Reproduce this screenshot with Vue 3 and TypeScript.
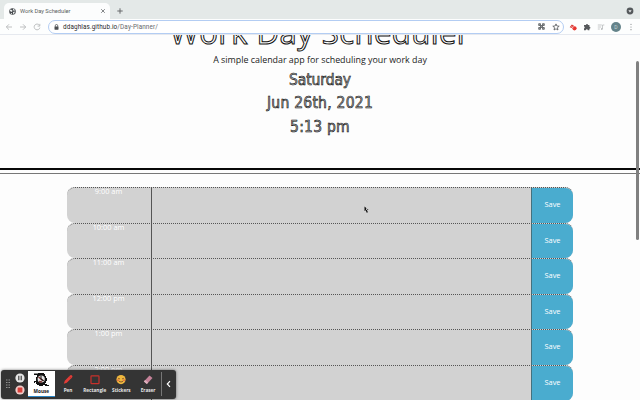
<script setup lang="ts">
interface Slot {
  id: number
  label: string
}

const slots: Slot[] = ['9:00 am', '10:00 am', '11:00 am', '12:00 pm', '1:00 pm', '2:00 pm'].map(
  (label, id) => ({ id, label }),
)
</script>

<template>
  <div class="window">
    <header class="chrome">
      <div class="tabs">
        <div class="tab">
          <svg class="globe" viewBox="0 0 14 14">
            <circle cx="7" cy="7" r="6.5" fill="#45494d" />
            <path d="M2 3l4 1 1 2-2 2-3-2zM8 1l4 3-2 2-2-2zM8 8l4-1-2 5-2-1zM3 10l3 0 0 3z" fill="#e9ecec" />
          </svg>
          <span class="tab-title">Work Day Scheduler</span>
          <svg class="close" viewBox="0 0 6 6"><path d="M1.2 1.2l3.6 3.6M4.8 1.2L1.2 4.8" stroke="#66696c" stroke-width=".8" /></svg>
        </div>
        <svg class="plus" viewBox="0 0 6 6"><path d="M3 .3v5.4M.3 3h5.4" stroke="#66696b" /></svg>
        <svg class="tab-search" viewBox="0 0 8 8">
          <circle cx="4" cy="4" r="3.4" fill="#55595c" />
          <path d="M2.4 3.2h3.2L4 5.4z" fill="#eef0f0" />
        </svg>
      </div>
      <div class="toolbar">
        <svg class="nav" viewBox="0 0 8 8"><path d="M7 4H1.4M4 1.3L1.3 4 4 6.7" /></svg>
        <svg class="nav" viewBox="0 0 8 8"><path d="M1 4h5.6M4 1.3L6.7 4 4 6.7" /></svg>
        <svg class="nav" viewBox="0 0 8 8"><path d="M6.4 2.2A2.9 2.9 0 1 0 6.9 4.6M6.8 .9v2.2H4.6" /></svg>
        <div class="address">
          <svg class="lock" viewBox="0 0 5 6">
            <path d="M1.3 2.8V1.7a1.2 1.2 0 0 1 2.4 0v1.1" fill="none" stroke="#4b4e51" stroke-width=".8" />
            <rect x=".5" y="2.4" width="4" height="3.3" rx=".4" fill="#4b4e51" />
          </svg>
          <span class="url"><span class="host">ddaghlas.github.io</span>/Day-Planner/</span>
          <svg class="qr" viewBox="0 0 7 7">
            <path d="M.7.7h1.8v1.8H.7zM4.5.7h1.8v1.8H4.5zM.7 4.5h1.8v1.8H.7zM4.5 4.5h1.8v1.8H4.5zM2.5 2.5h2v2h-2z" fill="#9a9d9f" stroke="#595d60" stroke-width=".8" />
          </svg>
          <svg class="star" viewBox="0 0 8 8">
            <path d="M4 .9l.9 2.1 2.3.2-1.8 1.5.6 2.3L4 5.8 2 7l.6-2.3L.8 3.2 3.1 3z" fill="none" stroke="#505457" stroke-width=".8" />
          </svg>
        </div>
        <svg class="ext" viewBox="0 0 8 8">
          <path d="M.7 4.2L2.8 1.4 5 2.7 3 4.9z" fill="#d93a35" />
          <circle cx="5.5" cy="5.3" r="2.1" fill="#e8352e" />
          <path d="M2.4 3.4l2 1.4" stroke="#fff" stroke-width=".6" />
        </svg>
        <svg class="ext" viewBox="0 0 8 8">
          <path d="M1 2h2a1 1 0 0 1 2 0h1.4v1.7a1 1 0 0 1 0 2V7.2H4.8a1 1 0 0 0-2 0H1V5.5a1 1 0 0 0 0-1.9z" fill="#56595c" />
        </svg>
        <svg class="ext" viewBox="0 0 8 8">
          <path d="M.8 2h4M.8 4h3.4M.8 6h2M5.5 6V2h1.8" fill="none" stroke="#b9bcbe" stroke-width=".8" />
          <circle cx="4.8" cy="6" r=".9" fill="#b9bcbe" />
        </svg>
        <span class="avatar">D</span>
        <svg class="dots" viewBox="0 0 2 8">
          <circle cx="1" cy="1.3" r=".6" /><circle cx="1" cy="4" r=".6" /><circle cx="1" cy="6.7" r=".6" />
        </svg>
      </div>
    </header>

    <main class="page">
      <section class="hero">
        <h1>Work Day Scheduler</h1>
        <p class="lead">A simple calendar app for scheduling your work day</p>
        <p class="now day">Saturday</p>
        <p class="now date">Jun 26th, 2021</p>
        <p class="now time">5:13 pm</p>
      </section>
      <section class="planner">
        <div v-for="slot in slots" :key="slot.id" class="row">
          <div class="hour">{{ slot.label }}</div>
          <div class="task"></div>
          <div class="save">Save</div>
        </div>
      </section>
      <div class="scrollbar"></div>
    </main>

    <svg class="cursor" viewBox="0 0 5 7">
      <path d="M.5.4v4.5l1.2-.6 1 2.4 1.2-.5-1-2.1h1.7z" fill="#111" />
      <path d="M2 2.6h1.3v1.2H2z" fill="#fff" />
    </svg>

    <aside class="recorder">
      <svg class="grip" viewBox="0 0 4 10">
        <path d="M.2 1h1.2M2.6 1h1.2M.2 3.5h1.2M2.6 3.5h1.2M.2 6h1.2M2.6 6h1.2M.2 8.5h1.2M2.6 8.5h1.2" stroke="#aaa" stroke-width="1.1" />
      </svg>
      <div class="controls">
        <svg viewBox="0 0 10 10"><circle cx="5" cy="5" r="4.6" fill="#e5e5e5" /><path d="M3.8 2.8v4.4M6.2 2.8v4.4" stroke="#333" stroke-width="1.1" /></svg>
        <svg viewBox="0 0 10 10"><circle cx="5" cy="5" r="4.6" fill="#efcdca" /><rect x="2.6" y="2.6" width="4.8" height="4.8" rx=".5" fill="#d8403b" /></svg>
      </div>
      <div class="tool mouse">
        <svg class="glyph" viewBox="0 0 16 16">
          <path d="M1 1.5h4V1h6v1h1v2h1v2h1v3h-1v2h-1v1h2v1h2v1h-4v-1h-2v1H6v-1H4v-1H3v-2H2v1H1V9h2V5h1V3H1z" fill="#111" />
          <circle cx="8.2" cy="7" r="3.6" fill="#e4e4e4" />
          <path d="M5.5 5l5 4M6 9.4l3 .6" stroke="#7b3431" stroke-width="1.5" />
          <path d="M8 3.5v4l2.6 1" stroke="#111" fill="none" />
        </svg>
        <span>Mouse</span>
      </div>
      <div class="tool pen">
        <svg class="glyph" viewBox="0 0 14 13"><path d="M2.8 10.8l1-3L9 2.6a1.3 1.3 0 0 1 2 2L5.8 9.8z" fill="#e23c37" /><path d="M8.2 3.4l2 2" stroke="#ad2927" stroke-width=".7" /></svg>
        <span>Pen</span>
      </div>
      <div class="tool rect">
        <svg class="glyph" viewBox="0 0 14 13"><rect x="3" y="2.8" width="8" height="7.8" rx=".7" fill="none" stroke="#c8302b" stroke-width="1.2" /></svg>
        <span>Rectangle</span>
      </div>
      <div class="tool stickers">
        <svg class="glyph" viewBox="0 0 14 13">
          <circle cx="7" cy="6.6" r="4.6" fill="#efb83e" />
          <path d="M4.2 5.3l1.7.6M8.1 5.9l1.7-.6M5 8.2q2 1.7 4 0" fill="none" stroke="#6c3d22" stroke-width=".8" />
          <circle cx="4" cy="7.3" r="1" fill="#e86b40" /><circle cx="10" cy="7.3" r="1" fill="#e86b40" />
        </svg>
        <span>Stickers</span>
      </div>
      <div class="tool eraser">
        <svg class="glyph" viewBox="0 0 14 13"><path d="M2.8 8.4l5.7-6 3 2.5-5.6 6z" fill="#c58299" /><path d="M2.8 8.4l1.4-1.5 3 2.6-1.3 1.4z" fill="#ddb2bf" /></svg>
        <span>Eraser</span>
      </div>
      <div class="collapse">
        <svg viewBox="0 0 5 8"><path d="M4 1.2L1.3 4 4 6.8" fill="none" stroke="#fff" stroke-width="1.2" /></svg>
      </div>
    </aside>
  </div>
</template>

<style>
html,
body {
  margin: 0;
  overflow: hidden;
}
</style>

<style scoped>
* { box-sizing: border-box; }
svg { display: block; flex: none; }

.window {
  position: relative;
  width: 640px;
  height: 400px;
  overflow: hidden;
  display: flex;
  flex-direction: column;
  background: #fdfdfd;
  font-family: 'Open Sans', sans-serif;
  color: #222;
}

.chrome { flex: none; height: 35px; font-family: Roboto, sans-serif; }
.tabs {
  height: 19px;
  padding: 3px 6px 0 4px;
  display: flex;
  align-items: center;
  background: #e4e9e8;
}
.tab {
  width: 106px;
  height: 16px;
  padding: 0 4px 0 5px;
  display: flex;
  align-items: center;
  background: #fcfdfd;
  border-radius: 5px 5px 0 0;
}
.globe { width: 7px; height: 7px; }
.tab-title { margin-left: 4px; flex: 1; font-size: 5.7px; color: #5a5d60; white-space: nowrap; }
.close { width: 6px; height: 6px; }
.plus { width: 6px; height: 6px; margin-left: 7px; }
.tab-search { width: 8px; height: 8px; margin-left: auto; }

.toolbar {
  height: 16px;
  padding: 0 8px 0 5px;
  display: flex;
  align-items: center;
  background: #fdfefe;
  border-bottom: 1px solid #e6e9ef;
}
.nav { width: 8px; height: 8px; margin-right: 6px; fill: none; stroke: #aeb1b3; stroke-width: .8; }
.nav:nth-child(3) { margin-right: 7px; }
.address {
  flex: 1;
  height: 14px;
  padding: 0 3px 0 5px;
  display: flex;
  align-items: center;
  border: 1px solid #b3cdf3;
  border-radius: 7px;
  background: #fff;
}
.lock { width: 5px; height: 6px; }
.url { margin-left: 4px; flex: 1; font-size: 6.35px; letter-spacing: .12px; color: #66696c; white-space: nowrap; }
.host { color: #27292b; }
.qr { width: 7px; height: 7px; }
.star { width: 8px; height: 8px; margin-left: 7px; }
.ext { width: 8px; height: 8px; margin-left: 6px; }
.address + .ext { margin-left: 5px; }
.avatar {
  flex: none;
  width: 10px;
  height: 10px;
  margin-left: 6px;
  border-radius: 50%;
  background: #64838a;
  color: #c6d4d6;
  font-size: 5px;
  line-height: 10px;
  text-align: center;
}
.dots { width: 2px; height: 8px; margin-left: 9px; fill: #85888a; }

.page { position: relative; flex: 1; min-height: 0; overflow: hidden; }
.hero {
  height: 139px;
  border-bottom: 1px solid #777;
  text-align: center;
  overflow: hidden;
  display: flex;
  flex-direction: column;
  align-items: center;
  position: relative;
}
.hero::after {
  content: '';
  width: 100%;
  height: 2px;
  margin-top: auto;
  margin-bottom: 3px;
  flex: none;
  background: #080808;
}
h1 {
  margin: -25px 0 0;
  height: 43px;
  font-size: 31px;
  line-height: 44px;
  font-weight: 400;
  letter-spacing: .45px;
  color: #fff;
  -webkit-text-stroke: 1px #101010;
  white-space: nowrap;
}
p { margin: 0; white-space: nowrap; }
.lead { font-size: 8.9px; line-height: 14px; color: #222; }
.now {
  height: 23.4px;
  font-family: 'DejaVu Sans Condensed', 'DejaVu Sans', sans-serif;
  font-stretch: condensed;
  font-size: 15.5px;
  letter-spacing: .25px;
  line-height: 23px;
  color: #aaa;
  -webkit-text-stroke: .55px #080808;
}
.day { margin-top: 2px; letter-spacing: -.1px; }

.planner { width: 506.5px; margin: 13px 0 0 66.5px; }
.row {
  height: 35.6px;
  display: flex;
  border-top: 1px dotted #555;
  border-radius: 8px;
  overflow: hidden;
  background: #d2d2d2;
}
.hour {
  width: 85px;
  border-right: 1px solid #555;
  color: #fff;
  font-size: 7.4px;
  line-height: 7px;
  text-align: center;
}
.task { flex: 1; }
.save {
  width: 42px;
  border-left: 1px solid #44717e;
  background: #4aaccf;
  color: #fff;
  font-size: 7.4px;
  line-height: 33px;
  text-align: center;
}
.scrollbar {
  position: absolute;
  right: 1px;
  top: 26px;
  width: 3px;
  height: 179px;
  border-radius: 2px;
  background: #808080;
}
.cursor { position: absolute; left: 364px; top: 206px; width: 5px; height: 7px; }

.recorder {
  position: absolute;
  left: 1px;
  top: 370px;
  width: 175px;
  height: 29px;
  padding: 0 0 2px 5px;
  display: flex;
  align-items: center;
  border-radius: 3px;
  background: #343434;
  box-shadow: 0 0 3px rgba(0, 0, 0, .55);
  color: #e6e6e6;
}
.grip { width: 4px; height: 10px; }
.controls { margin-left: 5px; display: flex; flex-direction: column; gap: 2px; }
.controls svg { width: 10px; height: 10px; }
.tool {
  flex: none;
  width: 26.7px;
  height: 26px;
  padding-top: 2px;
  display: flex;
  flex-direction: column;
  align-items: center;
  font-size: 4.7px;
  line-height: 7px;
  font-weight: 700;
  white-space: nowrap;
}
.tool span { margin-top: 1px; }
.glyph { width: 14px; height: 13px; }
.mouse { margin-left: 3px; height: 26px; padding-top: 1px; background: #fff; color: #111; border-bottom: 1px solid #2985c5; }
.mouse .glyph { width: 16px; height: 16px; }
.mouse span { margin-top: 0; }
.collapse {
  height: 24px;
  padding-left: 4px;
  display: flex;
  align-items: center;
  border-left: 1px solid #777;
}
.collapse svg { width: 5px; height: 8px; }
</style>
